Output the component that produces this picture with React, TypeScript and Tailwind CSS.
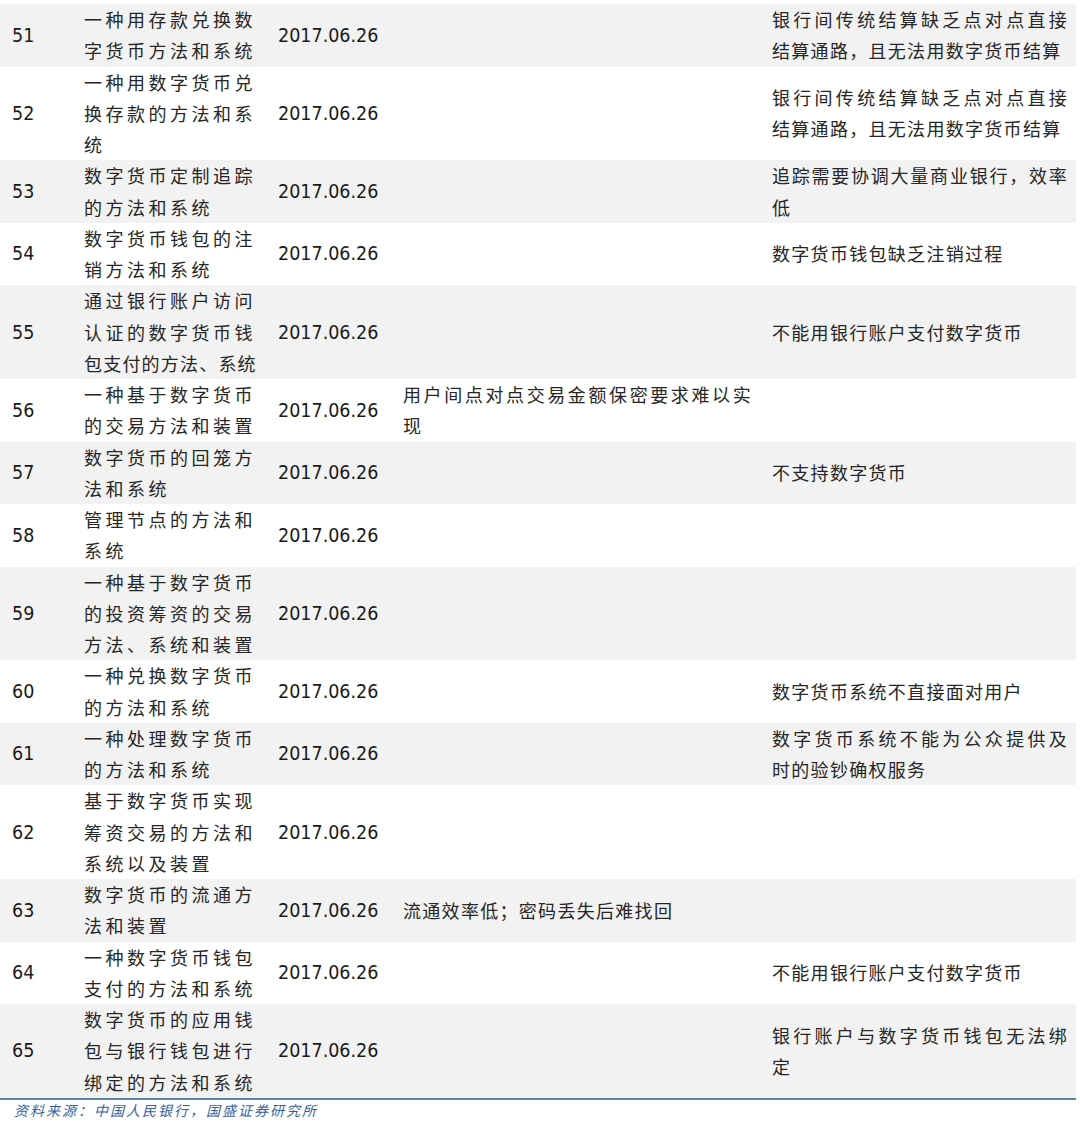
type Row = {
  no: number;
  name: string[];
  mid?: string[];
  reason?: string[];
};

const rows: Row[] = [
  { no: 51, name: ["一种用存款兑换数", "字货币方法和系统"], reason: ["银行间传统结算缺乏点对点直接", "结算通路，且无法用数字货币结算"] },
  { no: 52, name: ["一种用数字货币兑", "换存款的方法和系", "统"], reason: ["银行间传统结算缺乏点对点直接", "结算通路，且无法用数字货币结算"] },
  { no: 53, name: ["数字货币定制追踪", "的方法和系统"], reason: ["追踪需要协调大量商业银行，效率", "低"] },
  { no: 54, name: ["数字货币钱包的注", "销方法和系统"], reason: ["数字货币钱包缺乏注销过程"] },
  { no: 55, name: ["通过银行账户访问", "认证的数字货币钱", "包支付的方法、系统"], reason: ["不能用银行账户支付数字货币"] },
  { no: 56, name: ["一种基于数字货币", "的交易方法和装置"], mid: ["用户间点对点交易金额保密要求难以实", "现"] },
  { no: 57, name: ["数字货币的回笼方", "法和系统"], reason: ["不支持数字货币"] },
  { no: 58, name: ["管理节点的方法和", "系统"] },
  { no: 59, name: ["一种基于数字货币", "的投资筹资的交易", "方法、系统和装置"] },
  { no: 60, name: ["一种兑换数字货币", "的方法和系统"], reason: ["数字货币系统不直接面对用户"] },
  { no: 61, name: ["一种处理数字货币", "的方法和系统"], reason: ["数字货币系统不能为公众提供及", "时的验钞确权服务"] },
  { no: 62, name: ["基于数字货币实现", "筹资交易的方法和", "系统以及装置"] },
  { no: 63, name: ["数字货币的流通方", "法和装置"], mid: ["流通效率低；密码丢失后难找回"] },
  { no: 64, name: ["一种数字货币钱包", "支付的方法和系统"], reason: ["不能用银行账户支付数字货币"] },
  { no: 65, name: ["数字货币的应用钱", "包与银行钱包进行", "绑定的方法和系统"], reason: ["银行账户与数字货币钱包无法绑", "定"] },
];

const cjk = "font-['Noto_Sans_CJK_SC',sans-serif]";
const latin = "font-['DejaVu_Sans_Condensed','DejaVu_Sans',sans-serif]";

// multi-line cells are justified on every line but the last
function Lines({ lines }: { lines?: string[] }) {
  if (!lines) return null;
  return (
    <div className={`${cjk} text-[18px] leading-[31.25px] tracking-[1.3px] text-[#262626]`}>
      {lines.map((l, i) => (
        <div
          key={i}
          className={
            i < lines.length - 1
              ? "whitespace-nowrap text-justify [text-align-last:justify]"
              : "whitespace-nowrap"
          }
        >
          {l}
        </div>
      ))}
    </div>
  );
}

function TableRow({ row, shaded }: { row: Row; shaded: boolean }) {
  return (
    <div
      className={`grid grid-cols-[84px_194px_125px_369px_296px] items-center ${
        shaded ? "bg-[#f2f2f2]" : "bg-white"
      }`}
    >
      <div className={`${latin} pl-[12px] text-[19.5px] text-[#1a1a1a]`}>{row.no}</div>
      <div className={`${cjk} text-[18px] leading-[31.25px] text-[#262626]`}>
        {row.name.map((l, i) => (
          <div
            key={i}
            className={`whitespace-nowrap ${l.length > 8 ? "tracking-[1.2px]" : "tracking-[3.5px]"}`}
          >
            {l}
          </div>
        ))}
      </div>
      <div className={`${latin} text-[19.5px] text-[#1a1a1a]`}>2017.06.26</div>
      <div className="pr-[20px]">
        <Lines lines={row.mid} />
      </div>
      <div>
        <Lines lines={row.reason} />
      </div>
    </div>
  );
}

export default function App() {
  return (
    <div className="h-[1132px] w-[1080px] overflow-hidden bg-white pt-[4px]">
      <div className="w-[1076px]">
        {rows.map((r, i) => (
          <TableRow key={r.no} row={r} shaded={i % 2 === 0} />
        ))}
        <div className="h-[2px] bg-[#5b80a9]" />
      </div>
      <p
        className={`${cjk} pl-[14px] text-[14px] leading-[20px] tracking-[2px] italic text-[#3a5fa0]`}
      >
        资料来源：中国人民银行，国盛证券研究所
      </p>
    </div>
  );
}
